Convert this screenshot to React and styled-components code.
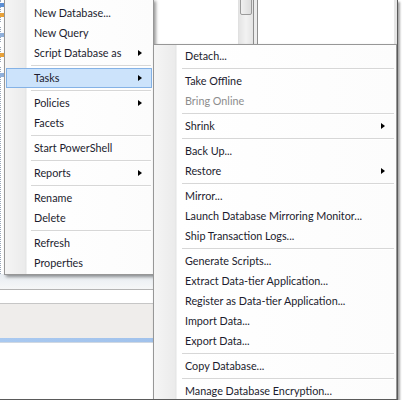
import React from "react";
import styled, { createGlobalStyle } from "styled-components";

const GlobalStyle = createGlobalStyle`
  html, body {
    margin: 0;
    padding: 0;
    background: #fff;
  }
  body {
    font-family: Lato, "Open Sans", sans-serif;
  }
`;

const Frame = styled.div`
  position: relative;
  width: 397px;
  height: 399px;
  overflow: hidden;
  display: flex;
  flex-direction: column;
  background: #fff;
  border-right: 1px solid #5a5a5a;
  border-bottom: 1px solid #5a5a5a;
  box-shadow: 2px 2px 2px rgba(0, 0, 0, 0.35);
`;

const TopArea = styled.div`
  display: flex;
  height: 274px;
`;

const TreePane = styled.div`
  width: 253px;
  display: flex;
  border-right: 1px solid #8e8e8e;
`;

const TreeList = styled.div`
  flex: 1;
  display: flex;
  flex-direction: column;
  border-left: 1px dotted #9aa7b8;
`;

const TreeRow = styled.div`
  height: 10px;
  display: flex;
  align-items: center;
`;

const TreeIcon = styled.span`
  display: block;
  width: 12px;
  height: 4px;
  margin-left: -9px;
  background: ${(p) => p.$color};
`;

const Scrollbar = styled.div`
  width: 14px;
  background: linear-gradient(to right, #e4e4e4, #f2f2f2 50%, #e4e4e4);
  border-left: 1px solid #e0e0e0;
`;

const Thumb = styled.div`
  height: 15px;
  margin: -2px 1px 0;
  border: 1px solid #9a9a9a;
  border-radius: 2px;
  background: linear-gradient(to right, #f0f0f0, #dcdcdc);
`;

const Splitter = styled.div`
  width: 3px;
  background: #ececec;
  border-right: 1px solid #8e8e8e;
`;

const RightPane = styled.div`
  flex: 1;
  background: #fff;
  border-right: 3px solid #e6e6e6;
`;

const BottomArea = styled.div`
  flex: 1;
  display: flex;
  flex-direction: column;
`;

const Toolbar = styled.div`
  height: 15px;
  background: linear-gradient(to bottom, #e7ecf1, #f6f7f8);
  border-bottom: 1px solid #b4b4b4;
`;

const Field = styled.div`
  height: 13px;
  background: #fff;
  border-bottom: 1px solid #c6c6c6;
`;

const GrayBar = styled.div`
  height: 34px;
  background: #efedeb;
`;

const BlueLine = styled.div`
  height: 4px;
  background: linear-gradient(to right, #a9c9f0, #9fc0ea 50%, #b6cde6 60%, #a9c9f0);
  border-bottom: 1px solid #d0d8e2;
`;

const WhiteArea = styled.div`
  flex: 1;
  background: #fff;
`;

const Menu = styled.div`
  position: absolute;
  left: ${(p) => p.$left}px;
  top: ${(p) => p.$top}px;
  width: ${(p) => p.$width}px;
  box-sizing: border-box;
  padding: ${(p) => p.$padTop}px 0 1px;
  border: 1px solid #979797;
  background: linear-gradient(
    to right,
    #f5f5f5 0,
    #ebebeb ${(p) => p.$gutter - 2}px,
    #e2e3e3 ${(p) => p.$gutter - 1}px,
    #ffffff ${(p) => p.$gutter}px,
    #fcfcfc 100%
  );
  box-shadow: 2px 2px 3px rgba(0, 0, 0, 0.4);
`;

const Item = styled.div`
  height: 20px;
  margin: 0 1px;
  box-sizing: border-box;
  display: flex;
  align-items: center;
  padding: 0 9px 1px ${(p) => p.$indent}px;
  font-size: 10.8px;
  color: ${(p) => (p.$disabled ? "#8d8d8d" : "#1c1c2e")};
  white-space: nowrap;
  border: 1px solid ${(p) => (p.$active ? "#84b2e6" : "transparent")};
  background: ${(p) => (p.$active ? "#cce3fb" : "transparent")};
`;

const Label = styled.span`
  flex: 1;
`;

const Arrow = styled.span`
  width: 0;
  height: 0;
  margin-top: 1px;
  border-left: 4px solid #000;
  border-top: 3.5px solid transparent;
  border-bottom: 3.5px solid transparent;
`;

const Separator = styled.div`
  height: 1px;
  margin: 2px 2px 1px ${(p) => p.$indent}px;
  background: #d7d7d7;
  border-bottom: 1px solid #fff;
`;

const mainItems = [
  ["New Database..."],
  ["New Query"],
  ["Script Database as", "sub"],
  "-",
  ["Tasks", "sub", "active"],
  "-",
  ["Policies", "sub"],
  ["Facets"],
  "-",
  ["Start PowerShell"],
  "-",
  ["Reports", "sub"],
  "-",
  ["Rename"],
  ["Delete"],
  "-",
  ["Refresh"],
  ["Properties"],
];

const taskItems = [
  ["Detach..."],
  "-",
  ["Take Offline"],
  ["Bring Online", "", "disabled"],
  "-",
  ["Shrink", "sub"],
  "-",
  ["Back Up..."],
  ["Restore", "sub"],
  "-",
  ["Mirror..."],
  ["Launch Database Mirroring Monitor..."],
  ["Ship Transaction Logs..."],
  "-",
  ["Generate Scripts..."],
  ["Extract Data-tier Application..."],
  ["Register as Data-tier Application..."],
  ["Import Data..."],
  ["Export Data..."],
  "-",
  ["Copy Database..."],
  "-",
  ["Manage Database Encryption..."],
];

const treeColors = ["#5b8fd6", "#e8a23a", "#fff", "#8fb0dc", "#fff", "#e8a23a", "#fff", "#8fb0dc"];

function MenuList({ items, indent, sepIndent }) {
  return items.map((it, i) =>
    it === "-" ? (
      <Separator key={i} $indent={sepIndent} />
    ) : (
      <Item key={i} $indent={indent} $active={it[2] === "active"} $disabled={it[2] === "disabled"}>
        <Label>{it[0]}</Label>
        {it[1] === "sub" && <Arrow />}
      </Item>
    )
  );
}

export default function App() {
  return (
    <>
      <GlobalStyle />
      <Frame>
        <TopArea>
          <TreePane>
            <TreeList>
              {treeColors.map((c, i) => (
                <TreeRow key={i}>
                  <TreeIcon $color={c} />
                </TreeRow>
              ))}
            </TreeList>
            <Scrollbar>
              <Thumb />
            </Scrollbar>
          </TreePane>
          <Splitter />
          <RightPane />
        </TopArea>
        <BottomArea>
          <Toolbar />
          <Field />
          <GrayBar />
          <BlueLine />
          <WhiteArea />
        </BottomArea>

        <Menu $left={4} $top={-1} $width={150} $padTop={3} $gutter={22}>
          <MenuList items={mainItems} indent={27} sepIndent={26} />
        </Menu>
        <Menu $left={153} $top={44} $width={244} $padTop={1} $gutter={23}>
          <MenuList items={taskItems} indent={29} sepIndent={28} />
        </Menu>
      </Frame>
    </>
  );
}
